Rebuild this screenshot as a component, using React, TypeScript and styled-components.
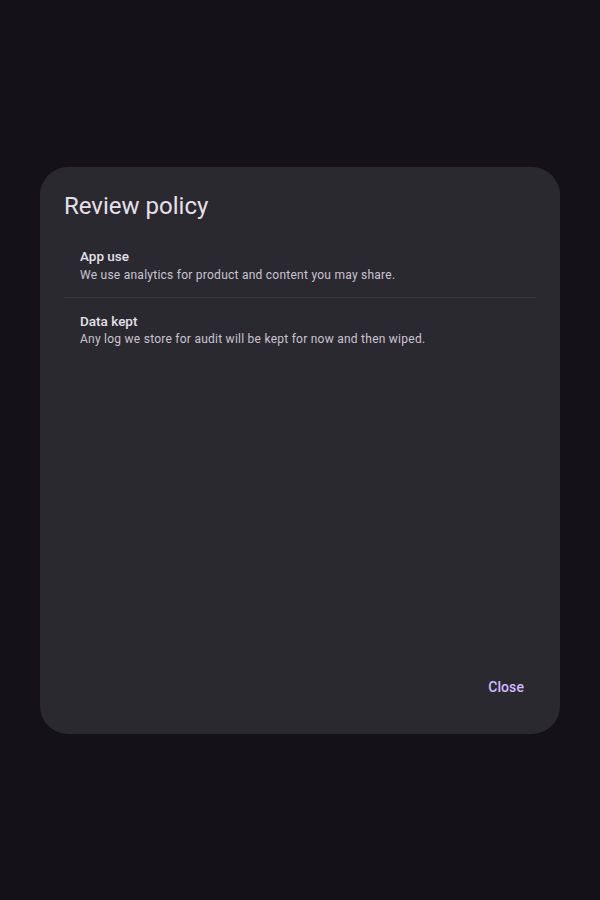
import styled, { createGlobalStyle } from 'styled-components';

interface Section {
    heading: string
    body: string
}

const sections: Section[] = [
    { heading: 'App use', body: 'We use analytics for product and content you may share.' },
    { heading: 'Data kept', body: 'Any log we store for audit will be kept for now and then wiped.' },
]

const App = () => {
    return (
        <>
            <GlobalStyle />
            <Page>
                <Dialog role="dialog" aria-labelledby="dialog-title">
                    <Title id="dialog-title">Review policy</Title>
                    <List>
                        {sections.map((s, i) => (
                            <Item key={s.heading} $divided={i > 0}>
                                <Heading>{s.heading}</Heading>
                                <Body>{s.body}</Body>
                            </Item>
                        ))}
                    </List>
                    <Actions>
                        <TextButton type="button">Close</TextButton>
                    </Actions>
                </Dialog>
            </Page>
        </>
    )
}

const GlobalStyle = createGlobalStyle`
    html, body {
        margin: 0;
        height: 100%;
        background: #141218;
    }
    body {
        font-family: Roboto, "Noto Sans", "Liberation Sans", sans-serif;
        color: #e6e0e9;
    }
    #root {
        height: 100%;
    }
`

const Page = styled.div`
    height: 100%;
    display: flex;
    align-items: center;
    justify-content: center;
`

const Dialog = styled.section`
    box-sizing: border-box;
    width: 520px;
    height: 567px;
    padding: 24px 24px 27px;
    background: #2b2930;
    border-radius: 28px;
    display: flex;
    flex-direction: column;
`

const Title = styled.h2`
    margin: 0 0 12px;
    font-size: 24px;
    line-height: 1.3;
    font-weight: 400;
    color: #e6e0e9;
`

const List = styled.div`
    flex: 1;
    display: flex;
    flex-direction: column;
`

const Item = styled.div<{ $divided: boolean }>`
    display: flex;
    flex-direction: column;
    gap: 1px;
    padding: ${p => (p.$divided ? '14px 16px 13px' : '13px 16px')};
    border-top: ${p => (p.$divided ? '1px solid #38363d' : 'none')};
`

const Heading = styled.h3`
    margin: 0;
    font-size: 13.5px;
    line-height: 1.4;
    font-weight: 500;
    color: #e6e0e9;
`

const Body = styled.p`
    margin: 0;
    font-size: 12px;
    line-height: 17px;
    letter-spacing: 0.25px;
    color: #cac4d0;
`

const Actions = styled.div`
    display: flex;
    justify-content: flex-end;
`

const TextButton = styled.button`
    height: 40px;
    padding: 0 12px;
    border: none;
    border-radius: 20px;
    background: transparent;
    color: #d0bcff;
    font-family: inherit;
    font-size: 14px;
    font-weight: 500;
    letter-spacing: 0.1px;
    cursor: pointer;
    &:hover {
        background: rgba(208, 188, 255, 0.08);
    }
`

export default App
